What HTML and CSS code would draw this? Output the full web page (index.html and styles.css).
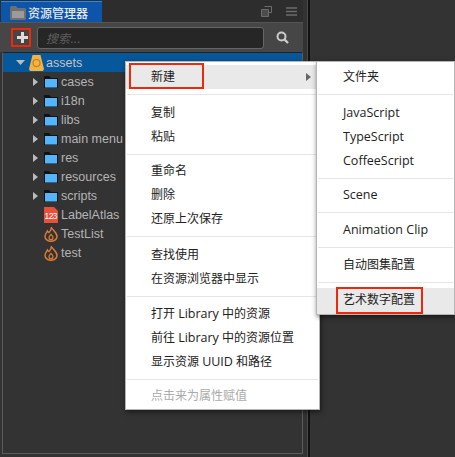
FILE: index.html
```html
<!DOCTYPE html>
<html lang="zh-CN">
<head>
    <meta charset="UTF-8">
    <title>资源管理器</title>
    <link rel="stylesheet" href="styles.css">
</head>
<body>
    <div class="app">
        <div class="panel">
            <div class="tabbar">
                <div class="tab">
                    <svg class="tab-icon" width="16" height="15" viewBox="0 0 16 15"><path d="M0 2.500 1 1h5l1.500 2H15l1 1v10l-1 1H1l-1-1z" fill="#6f6f6f"/><path d="M2 6h12v7H2z" fill="#9b9b9b"/></svg>
                    <span>资源管理器</span>
                </div>
                <div class="tab-tools">
                    <svg width="11" height="11" viewBox="0 0 11 11"><path d="M3.500.5h7v6h-3M.5 3.500h7v7h-7z" fill="none" stroke="#6c6c6c"/><path d="M1 4h6v6H1z" fill="#4c4c4c"/></svg>
                    <svg width="11" height="9" viewBox="0 0 11 9"><path d="M0 1h11M0 4.500h11M0 8h11" stroke="#6c6c6c" stroke-width="1.300"/></svg>
                </div>
            </div>
            <div class="toolbar">
                <button class="add-btn">
                    <svg width="11" height="11" viewBox="0 0 11 11"><path d="M4 0h3v4h4v3H7v4H4V7H0V4h4z" fill="#ddd"/></svg>
                </button>
                <div class="search">搜索...</div>
                <svg class="search-icon" width="13" height="13" viewBox="0 0 13 13"><circle cx="5.500" cy="5.500" r="4" fill="none" stroke="#ccc" stroke-width="2"/><path d="m8.500 8.500 3.500 3.500" stroke="#ccc" stroke-width="2.400"/></svg>
            </div>
            <div class="tree">
                <div class="row row-selected">
                    <svg class="arrow" width="9" height="9" viewBox="0 0 9 9"><path d="M0 2h9L4.500 7z" fill="#bbb"/></svg>
                    <svg class="icon" width="15" height="16" viewBox="0 0 15 16"><path d="M3.500 0h8L15 14l-1 2H1l-1-2z" fill="#f3b340"/><circle cx="7.500" cy="8" r="3.500" fill="none" stroke="#b9812a" stroke-width="1.200"/></svg>
                    <span>assets</span>
                </div>
                <div class="row row-child">
                    <svg class="arrow" width="5" height="8" viewBox="0 0 5 8"><path d="M0 0l5 4-5 4z" fill="#bbb"/></svg>
                    <svg class="icon" width="14" height="12" viewBox="0 0 14 12"><path d="M0 0h5l2 2h7v10H0z" fill="#111"/><path d="M1 3h12v8.500H1z" fill="#54b5ff"/></svg>
                    <span>cases</span>
                </div>
                <div class="row row-child">
                    <svg class="arrow" width="5" height="8" viewBox="0 0 5 8"><path d="M0 0l5 4-5 4z" fill="#bbb"/></svg>
                    <svg class="icon" width="14" height="12" viewBox="0 0 14 12"><path d="M0 0h5l2 2h7v10H0z" fill="#111"/><path d="M1 3h12v8.500H1z" fill="#54b5ff"/></svg>
                    <span>i18n</span>
                </div>
                <div class="row row-child">
                    <svg class="arrow" width="5" height="8" viewBox="0 0 5 8"><path d="M0 0l5 4-5 4z" fill="#bbb"/></svg>
                    <svg class="icon" width="14" height="12" viewBox="0 0 14 12"><path d="M0 0h5l2 2h7v10H0z" fill="#111"/><path d="M1 3h12v8.500H1z" fill="#54b5ff"/></svg>
                    <span>libs</span>
                </div>
                <div class="row row-child">
                    <svg class="arrow" width="5" height="8" viewBox="0 0 5 8"><path d="M0 0l5 4-5 4z" fill="#bbb"/></svg>
                    <svg class="icon" width="14" height="12" viewBox="0 0 14 12"><path d="M0 0h5l2 2h7v10H0z" fill="#111"/><path d="M1 3h12v8.500H1z" fill="#54b5ff"/></svg>
                    <span>main menu</span>
                </div>
                <div class="row row-child">
                    <svg class="arrow" width="5" height="8" viewBox="0 0 5 8"><path d="M0 0l5 4-5 4z" fill="#bbb"/></svg>
                    <svg class="icon" width="14" height="12" viewBox="0 0 14 12"><path d="M0 0h5l2 2h7v10H0z" fill="#111"/><path d="M1 3h12v8.500H1z" fill="#54b5ff"/></svg>
                    <span>res</span>
                </div>
                <div class="row row-child">
                    <svg class="arrow" width="5" height="8" viewBox="0 0 5 8"><path d="M0 0l5 4-5 4z" fill="#bbb"/></svg>
                    <svg class="icon" width="14" height="12" viewBox="0 0 14 12"><path d="M0 0h5l2 2h7v10H0z" fill="#111"/><path d="M1 3h12v8.500H1z" fill="#54b5ff"/></svg>
                    <span>resources</span>
                </div>
                <div class="row row-child">
                    <svg class="arrow" width="5" height="8" viewBox="0 0 5 8"><path d="M0 0l5 4-5 4z" fill="#bbb"/></svg>
                    <svg class="icon" width="14" height="12" viewBox="0 0 14 12"><path d="M0 0h5l2 2h7v10H0z" fill="#111"/><path d="M1 3h12v8.500H1z" fill="#54b5ff"/></svg>
                    <span>scripts</span>
                </div>
                <div class="row row-leaf">
                    <svg class="icon" width="14" height="16" viewBox="0 0 14 16"><path d="M0 0h10l4 4v12H0z" fill="#e8503a"/><text x="7" y="12" font-size="8.500" font-family="Liberation Sans" fill="#fff" text-anchor="middle" textLength="13">123</text></svg>
                    <span>LabelAtlas</span>
                </div>
                <div class="row row-leaf">
                    <svg class="icon" width="14" height="16" viewBox="0 0 14 16"><path d="M7.500 1C8 4 13 6.500 13 10.500a6 4.800 0 0 1-12 0C1 8 2.500 6.500 3.500 5 4 6 4.500 6.500 5 6.500 6.500 5 7.500 3 7.500 1z" fill="none" stroke="#dd7a35" stroke-width="1.500"/><path d="M7 8.500c-1 1.200-2 2-2 3.200a2 2 0 0 0 4 0c0-1.200-1-2-2-3.200z" fill="none" stroke="#dd7a35" stroke-width="1.200"/></svg>
                    <span>TestList</span>
                </div>
                <div class="row row-leaf">
                    <svg class="icon" width="14" height="16" viewBox="0 0 14 16"><path d="M7.500 1C8 4 13 6.500 13 10.500a6 4.800 0 0 1-12 0C1 8 2.500 6.500 3.500 5 4 6 4.500 6.500 5 6.500 6.500 5 7.500 3 7.500 1z" fill="none" stroke="#dd7a35" stroke-width="1.500"/><path d="M7 8.500c-1 1.200-2 2-2 3.200a2 2 0 0 0 4 0c0-1.200-1-2-2-3.200z" fill="none" stroke="#dd7a35" stroke-width="1.200"/></svg>
                    <span>test</span>
                </div>
            </div>
        </div>
        <div class="divider"></div>
    </div>

    <!-- 右键菜单 -->
    <div class="menu menu-main">
        <div class="item item-active">新建<i class="caret"></i></div>
        <div class="sep sep-down"></div>
        <div class="item">复制</div>
        <div class="item">粘贴</div>
        <div class="sep sep-up"></div>
        <div class="item">重命名</div>
        <div class="item">删除</div>
        <div class="item">还原上次保存</div>
        <div class="sep sep-down"></div>
        <div class="item">查找使用</div>
        <div class="item">在资源浏览器中显示</div>
        <div class="sep"></div>
        <div class="item">打开 <span class="lat">Library</span> 中的资源</div>
        <div class="item">前往 <span class="lat">Library</span> 中的资源位置</div>
        <div class="item">显示资源 <span class="lat">UUID</span> 和路径</div>
        <div class="sep sep-up"></div>
        <div class="item item-disabled">点击来为属性赋值</div>
    </div>

    <div class="menu menu-sub">
        <div class="item">文件夹</div>
        <div class="sep sep-down"></div>
        <div class="item lat">JavaScript</div>
        <div class="item lat">TypeScript</div>
        <div class="item lat">CoffeeScript</div>
        <div class="sep sep-up"></div>
        <div class="item lat">Scene</div>
        <div class="sep"></div>
        <div class="item lat">Animation Clip</div>
        <div class="sep"></div>
        <div class="item">自动图集配置</div>
        <div class="sep"></div>
        <div class="item item-active item-last">艺术数字配置</div>
    </div>

    <!-- 红框标注 -->
    <div class="mark mark-add"></div>
    <div class="mark mark-new"></div>
    <div class="mark mark-art"></div>
</body>
</html>
```

FILE: styles.css
```css
html, body {
    margin: 0;
    height: 100%;
    overflow: hidden;
}
body {
    background-color: #333;
    font-family: "Liberation Sans", "Noto Sans CJK SC", sans-serif;
    position: relative;
}
.app {
    display: flex;
    height: 457px;
}
.panel {
    width: 303px;
    display: flex;
    flex-direction: column;
    padding-bottom: 3px;
    box-sizing: border-box;
    background-color: #333;
}
.tabbar {
    height: 22px;
    display: flex;
    justify-content: space-between;
    align-items: flex-end;
    background-color: #2d2d2d;
}
.tab {
    width: 101px;
    height: 21px;
    margin-left: 1px;
    box-sizing: border-box;
    border-top: 1px solid #2b8be0;
    background-color: #0d55ab;
    color: #e8e8e8;
    font-family: "Noto Sans CJK SC", sans-serif;
    font-size: 12px;
    font-weight: 500;
    display: flex;
    align-items: center;
    gap: 2px;
    padding-left: 9px;
}
.tab-tools {
    display: flex;
    align-items: center;
    gap: 14px;
    height: 22px;
    padding-right: 6px;
    box-sizing: border-box;
}
.toolbar {
    height: 30px;
    box-sizing: border-box;
    background-color: #464646;
    border-top: 1px solid #555;
    display: flex;
    align-items: center;
    padding: 0 14px 0 2px;
}
.add-btn {
    width: 22px;
    height: 20px;
    margin: 0 11px 0 9px;
    padding: 0;
    border: none;
    background: none;
    display: flex;
    align-items: center;
    justify-content: center;
}
.search {
    flex: 1;
    height: 22px;
    box-sizing: border-box;
    border: 1px solid #666;
    border-radius: 3px;
    background-color: #262626;
    color: #5e5e5e;
    font-family: "Noto Sans CJK SC", sans-serif;
    font-size: 12px;
    font-style: italic;
    line-height: 20px;
    padding-left: 8px;
    margin-left: -7px;
}
.search-icon {
    margin-left: 12px;
}
.tree {
    flex: 1;
    border: 1px solid #5c5c5c;
    border-top: 1px solid #222;
    margin-left: 2px;
    background-color: #333;
}
.row {
    height: 19px;
    display: flex;
    align-items: center;
    color: #b4b4b4;
    font-size: 12.5px;
}
.row-selected {
    background-color: #07579b;
    color: #c4c4c4;
    padding-left: 13px;
}
.row-selected .icon {
    margin-left: 4px;
    margin-right: 2px;
}
.row-child {
    padding-left: 30px;
}
.row-child .icon {
    margin-left: 6px;
    margin-right: 3px;
}
.row-leaf {
    padding-left: 41px;
}
.row-leaf .icon {
    margin-right: 3px;
}
.divider {
    width: 2px;
    height: 100%;
    margin-left: 4px;
    background-color: #111;
    border-left: 1px solid #4a4a4a;
}
.menu {
    position: absolute;
    top: 61px;
    box-sizing: border-box;
    background-color: #fff;
    border: 1px solid #b5b5b5;
    box-shadow: 1px 2px 5px rgba(0, 0, 0, 0.55);
    padding-top: 3px;
    font-family: "Open Sans", "Noto Sans CJK SC", sans-serif;
    font-size: 12px;
    color: #222;
}
.menu-main {
    left: 125px;
    width: 195px;
    height: 349px;
}
.menu-sub {
    left: 316px;
    width: 139px;
    height: 254px;
}
.item {
    height: 24px;
    line-height: 24px;
    padding-left: 25px;
    position: relative;
}
.menu-sub .item {
    padding-left: 26px;
}
.lat {
    font-size: 12.5px;
}
.item-active {
    background-color: #e9e9e9;
}
.item-last {
    height: 26px;
}
.item-disabled {
    color: #aaa;
}
.caret {
    position: absolute;
    right: 8px;
    top: 8px;
    border-left: 5px solid #666;
    border-top: 4px solid transparent;
    border-bottom: 4px solid transparent;
}
.sep {
    height: 1px;
    margin: 5px 1px;
    background-color: #e6e6e6;
}
.sep-down {
    margin-bottom: 6px;
}
.sep-up {
    margin-bottom: 4px;
}
.mark {
    position: absolute;
    box-sizing: border-box;
    border: 2px solid #f0280a;
}
.mark-add {
    left: 11px;
    top: 28px;
    width: 20px;
    height: 19px;
}
.mark-new {
    left: 129px;
    top: 63px;
    width: 75px;
    height: 26px;
}
.mark-art {
    left: 336px;
    top: 287px;
    width: 87px;
    height: 27px;
}
```
